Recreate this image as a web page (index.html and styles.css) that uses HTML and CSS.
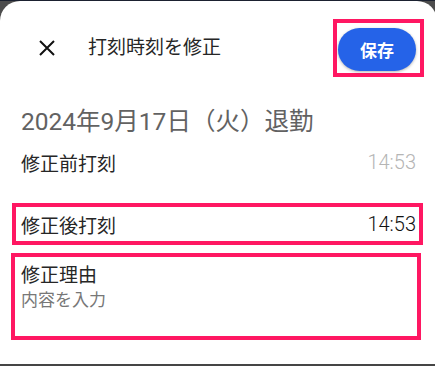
FILE: index.html
```html
<!DOCTYPE html>
<html lang="ja">
<head>
<meta charset="utf-8" />
<title>打刻時刻を修正</title>
<link rel="stylesheet" href="styles.css">
</head>
<body>
<div class="topbar"></div>
<div class="sheet">
  <div class="header">
    <span class="close">
      <svg width="16" height="16" viewBox="0 0 16 16"><path d="M1 1L15 15M15 1L1 15" stroke="#111" stroke-width="2" fill="none"/></svg>
    </span>
    <span class="title">打刻時刻を修正</span>
    <span class="mark save-mark"><span class="save">保存</span></span>
  </div>
  <div class="content">
    <h2 class="date">2024年9月17日（火）退勤</h2>
    <div class="row">
      <span class="label">修正前打刻</span>
      <span class="time muted">14:53</span>
    </div>
    <div class="row mark">
      <span class="label">修正後打刻</span>
      <span class="time">14:53</span>
    </div>
    <div class="reason mark">
      <div class="label">修正理由</div>
      <div class="placeholder">内容を入力</div>
    </div>
  </div>
</div>
<div class="bottombar"></div>
</body>
</html>
```

FILE: styles.css
```css
*{ padding:0; margin:0; box-sizing:border-box;}
html, body{ width:435px; height:366px; overflow:hidden;}
body{
  background:#4d4d4d;
  font-family:Roboto, "Noto Sans CJK JP", sans-serif;
  color:#222;
}
.topbar{ height:1px; background:#1b2130;}
.sheet{
  height:363px;
  background:#fff;
  border-radius:20px 20px 0 0;
  margin-right:-2px;
}
.bottombar{ height:2px; background:#454545;}

.mark{ border:4px solid #ff1762;}

.header{
  height:94px;
  display:flex;
  align-items:center;
  padding-left:39px;
}
.close{ width:16px; height:16px; display:flex;}
.title{
  margin-left:33px;
  font-size:19px;
  line-height:24px;
  color:#262626;
  flex:1;
}
.save-mark{
  width:91px;
  height:58px;
  padding:5px 4px 2px 1px;
  margin-right:13px;
}
.save{
  display:flex;
  align-items:center;
  justify-content:center;
  width:78px;
  height:43px;
  border-radius:22px;
  background:#2563e8;
  color:#fff;
  font-size:17px;
  font-weight:bold;
  box-shadow:0 1px 3px rgba(0,0,0,0.3);
}

.content{ padding:0 14px 0 12px;}
.date{
  margin:12px 0 0 9px;
  font-size:24.5px;
  line-height:29px;
  font-weight:normal;
  color:#626262;
}
.row{
  height:42px;
  margin-top:5px;
  padding:0 3px 0 5px;
  display:flex;
  align-items:center;
  justify-content:space-between;
  border:4px solid transparent;
  font-size:19px;
  color:#262626;
}
.row.mark{ margin-top:20px; border-color:#ff1762;}
.time{ font-size:20px; font-weight:300; color:#111;}
.time.muted{ color:#b5b5b5;}
.reason{
  height:87px;
  margin:8px 2px 0 -1px;
  padding:7px 0 0 6px;
}
.reason .label{ font-size:19px; line-height:24px; color:#262626;}
.placeholder{
  margin-top:1px;
  font-size:17px;
  line-height:22px;
  color:#777;
}
```
